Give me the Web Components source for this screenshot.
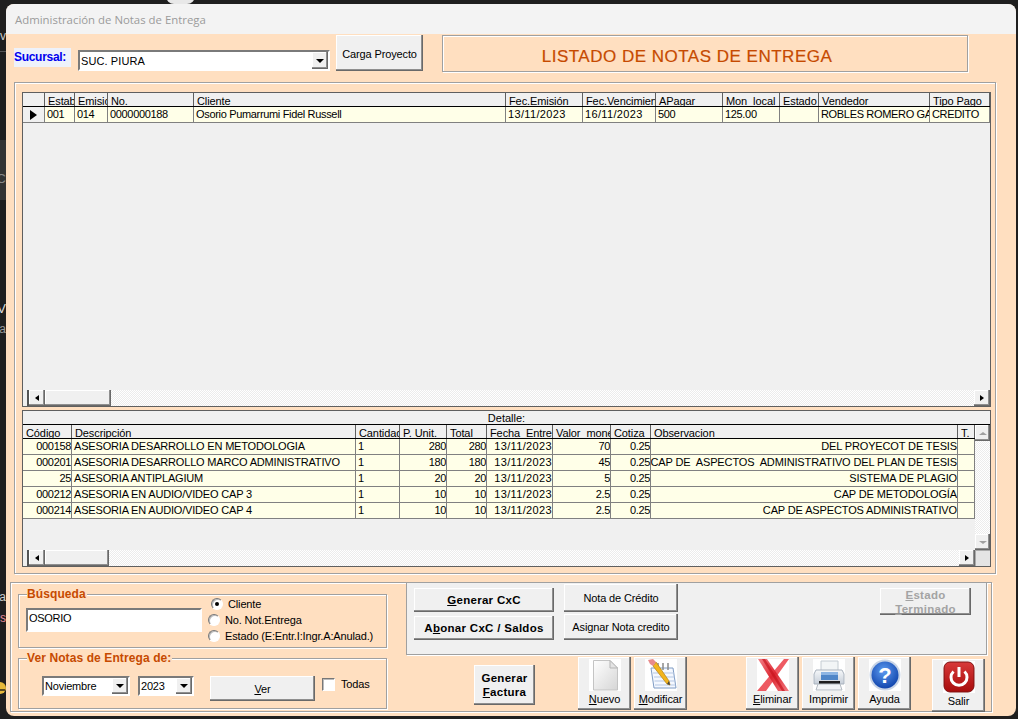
<!DOCTYPE html>
<html lang="es">
<head>
<meta charset="utf-8">
<title>Administración de Notas de Entrega</title>
<style>
  html, body { margin: 0; height: 100%; overflow: hidden; background: #1f1f1f; }
  body { font: 11px "Liberation Sans", Arial, sans-serif; color: #000; }
  svg { display: block; }
</style>
</head>
<body>
<desk-top>
  <app-window heading="Administración de Notas de Entrega">
    <main-form></main-form>
  </app-window>
</desk-top>

<script>
function shadow(el, html) {
  const root = el.attachShadow({ mode: "open" });
  root.innerHTML = html;
  return root;
}

const BEVEL = "inset -1px -1px 0 #696969, inset -2px -2px 0 #8f8f8f, inset 1px 1px 0 #fff";
const SUNKEN = "border: 2px solid; border-color: #7a7a7a #fff #fff #7a7a7a; outline: 0; box-sizing: border-box;";

class DeskTop extends HTMLElement {
  connectedCallback() {
    if (this.shadowRoot) return;
    shadow(this, `
      <style>
        :host { display: block; position: relative; width: 1018px; height: 719px; overflow: hidden; background: #1f1f1f; font: 11px "Liberation Sans", sans-serif; }
        .bit { position: absolute; white-space: nowrap; }
        .notch { left: 166px; top: -4px; width: 29px; height: 8px; border-radius: 0 0 12px 12px; background: #e8e8e8; }
        .rule { left: 0; top: 51px; width: 6px; height: 1px; background: #555; }
        .pane { left: 0; top: 140px; width: 6px; height: 60px; background: #333; }
        .face { left: -6px; top: 682px; width: 12px; height: 12px; }
      </style>
      <div class="bit notch"></div>
      <div class="bit rule"></div>
      <div class="bit pane"></div>
      <span class="bit" style="right:1012px;top:29px;color:#ccc;font-size:12px">ev</span>
      <span class="bit" style="right:1012px;top:171px;color:#888;font-size:13px">C</span>
      <span class="bit" style="right:1012px;top:301px;color:#ddd;font-size:13px">V</span>
      <span class="bit" style="right:1012px;top:322px;color:#999;font-size:12px">a</span>
      <span class="bit" style="right:1012px;top:590px;color:#ccc;font-size:12px">na</span>
      <span class="bit" style="right:1012px;top:611px;color:#e58a9a;font-size:12px">s</span>
      <svg class="bit face" viewBox="0 0 12 12"><circle cx="6" cy="6" r="6" fill="#e8b93a"/><path d="M6 8h5" stroke="#5a4a20" stroke-width="2"/></svg>
      <slot></slot>
    `);
  }
}

class AppWindow extends HTMLElement {
  connectedCallback() {
    if (this.shadowRoot) return;
    shadow(this, `
      <style>
        :host { display: flex; flex-direction: column; position: absolute; left: 6px; top: 4px; width: 1010px; height: 712px; border-radius: 8px; overflow: hidden; background: #ffdfc0; }
        header { height: 30px; flex: none; background: #f3f3f3; color: #9b9b9b; font: 11.4px/31px "Open Sans", sans-serif; padding-left: 9px; }
      </style>
      <header>${this.getAttribute("heading")}</header>
      <slot></slot>
    `);
  }
}

class WinButton extends HTMLElement {
  connectedCallback() {
    if (this.shadowRoot) return;
    shadow(this, `
      <style>
        :host { display: flex; flex: none; align-items: center; justify-content: center; text-align: center; box-sizing: border-box; background: #f0f0f0; box-shadow: ${BEVEL}; font: 11px/13px "Liberation Sans", sans-serif; letter-spacing: -.12px; padding-top: 1px; }
        :host([bold]) { font-weight: bold; letter-spacing: .3px; font-size: 11.5px; line-height: 14px; padding-top: 0; }
        :host([disabled]) { color: #a3a3a3; }
      </style>
      <div><slot></slot></div>
    `);
  }
}

class IconButton extends HTMLElement {
  connectedCallback() {
    if (this.shadowRoot) return;
    shadow(this, `
      <style>
        :host { display: flex; flex: none; flex-direction: column; align-items: center; box-sizing: border-box; width: 53px; height: 53px; padding-top: 2px; background: #f0f0f0; box-shadow: ${BEVEL}; font: 11px/13px "Liberation Sans", sans-serif; letter-spacing: -.1px; }
        .pic { width: 32px; height: 32px; background: #fff; }
        .txt { margin-top: 2px; }
      </style>
      <div class="pic"><slot name="icon"></slot></div>
      <div class="txt"><slot></slot></div>
    `);
  }
}

class WinCombo extends HTMLElement {
  connectedCallback() {
    if (this.shadowRoot) return;
    shadow(this, `
      <style>
        :host { display: flex; flex: none; box-sizing: border-box; ${SUNKEN} background: #fff; font: 11px "Liberation Sans", sans-serif; letter-spacing: -.2px; align-items: center; justify-content: space-between; padding-left: 1px; }
        .btn { width: 16px; height: 100%; display: flex; align-items: center; justify-content: center; background: #f0f0f0; box-shadow: ${BEVEL}; }
        i { border: 4px solid transparent; border-top: 4px solid #000; border-bottom: 0; }
      </style>
      <span><slot></slot></span>
      <div class="btn"><i></i></div>
    `);
  }
}

class GroupBox extends HTMLElement {
  connectedCallback() {
    if (this.shadowRoot) return;
    const legend = this.getAttribute("legend");
    shadow(this, `
      <style>
        :host { display: block; flex: none; position: relative; box-sizing: border-box; border: 1px solid #a0a0a0; box-shadow: inset 1px 1px 0 #fff, 1px 1px 0 #fff; }
        .legend { position: absolute; left: 8px; top: -8px; padding: 0 1px 0 0; background: #ffdfc0; color: #c64a00; font: bold 12px/15px "Liberation Sans", sans-serif; letter-spacing: .1px; white-space: nowrap; }
      </style>
      ${legend ? `<div class="legend">${legend}</div>` : ""}
      <slot></slot>
    `);
  }
}

class OptionItem extends HTMLElement {
  connectedCallback() {
    if (this.shadowRoot) return;
    const box = this.getAttribute("kind") === "check";
    shadow(this, `
      <style>
        :host { display: flex; flex: none; align-items: center; height: 16px; font: 11px "Liberation Sans", sans-serif; letter-spacing: -.15px; white-space: nowrap; }
        .mark { flex: none; width: 12px; height: 12px; box-sizing: border-box; margin-right: 5px; background: #fff; display: flex; align-items: center; justify-content: center; border: 1px solid; border-color: #777 #fff #fff #777; border-radius: ${box ? "0" : "50%"}; box-shadow: inset 1px 1px 0 #bbb; }
        :host([kind=check]) .mark { width: 13px; height: 13px; margin-right: 6px; }
        b { width: 4px; height: 4px; border-radius: 50%; background: #000; display: none; }
        :host([on]) b { display: block; }
      </style>
      <div class="mark"><b></b></div><span><slot></slot></span>
    `);
  }
}

class ScrollBar extends HTMLElement {
  connectedCallback() {
    if (this.shadowRoot) return;
    const thumb = this.getAttribute("thumb") || 66;
    shadow(this, `
      <style>
        :host { display: flex; flex: none; height: 16px; background: #f0f0f0; }
        .lead { width: 4px; flex: none; }
        .stop { width: 2px; flex: none; background: #555; margin-right: 0; }
        .btn { width: 16px; flex: none; display: flex; align-items: center; justify-content: center; background: #f0f0f0; box-shadow: ${BEVEL}; }
        .thumb { width: ${thumb}px; flex: none; background: #f0f0f0; box-shadow: ${BEVEL}; }
        .track { flex: 1; background: conic-gradient(#fff 25%, #ececec 0 50%, #fff 0 75%, #ececec 0) 0 0 / 2px 2px; }
        .l { border: 3px solid transparent; border-right: 4px solid #000; border-left: 0; }
        .r { border: 3px solid transparent; border-left: 4px solid #000; border-right: 0; }
      </style>
      <div class="lead"></div><div class="stop"></div>
      <div class="btn"><i class="l"></i></div>
      <div class="thumb"></div>
      <div class="track"></div>
      <div class="btn"><i class="r"></i></div>
    `);
  }
}

class DataGrid extends HTMLElement {
  set data({ columns, rows, caption, corner }) {
    const root = this.shadowRoot || this.attachShadow({ mode: "open" });
    const tpl = columns.map(c => c.w + "px").join(" ");
    const head = columns.map(c => `<div class="hd">${c.t || ""}</div>`).join("");
    const body = rows.map(row => `<div class="row" style="grid-template-columns:${tpl}">` + row.map((val, i) => {
      const c = columns[i];
      const cls = c.marker ? "cell marker" : c.right ? "cell right" : "cell";
      const ls = c.ls ? ` style="letter-spacing:${c.ls}px"` : "";
      return `<div class="${cls}"${ls}><span>${val}</span></div>`;
    }).join("") + "</div>").join("");
    root.innerHTML = `
      <style>
        :host { display: flex; flex-direction: column; flex: none; box-sizing: border-box; border: 1px solid #5f5f5f; background: #f0f0f0; overflow: hidden; font: 11px "Liberation Sans", sans-serif; }
        .caption { height: 13px; flex: none; line-height: 14px; text-align: center; border-bottom: 1px solid #000; }
        .main { flex: 1; display: flex; min-height: 0; }
        .table { flex: 1; min-width: 0; overflow: hidden; }
        .heads { display: grid; grid-template-columns: ${tpl}; height: 14px; box-sizing: border-box; border-bottom: 1px solid #000; }
        .hd { border-right: 1px solid #5f5f5f; padding-left: 3px; line-height: 16px; height: 13px; overflow: hidden; white-space: nowrap; letter-spacing: -.1px; }
        .row { display: grid; height: 16px; box-sizing: border-box; background: #ffffe8; border-bottom: 1px solid #808080; }
        .cell { border-right: 1px solid #808080; padding: 0 1px 0 2px; line-height: 15px; height: 15px; overflow: hidden; white-space: pre; letter-spacing: -.33px; }
        .right { display: flex; justify-content: flex-end; padding: 0; }
        .right span { flex: none; }
        .marker { background: #f0f0f0; padding: 0; }
        .marker i { display: block; margin: 3px 0 0 7px; border: 5px solid transparent; border-left: 7px solid #000; border-right: 0; }
        .vbar { width: 15px; flex: none; display: flex; flex-direction: column; background: conic-gradient(#fff 25%, #ececec 0 50%, #fff 0 75%, #ececec 0) 0 0 / 2px 2px; justify-content: space-between; }
        .vbtn { height: 16px; background: #f0f0f0; box-shadow: ${BEVEL}; display: flex; align-items: center; justify-content: center; }
        .up { border: 4px solid transparent; border-bottom: 3px solid #a0a0a0; border-top: 0; }
        .dn { border: 4px solid transparent; border-top: 3px solid #a0a0a0; border-bottom: 0; }
        .foot { display: flex; flex: none; }
        .foot win-scroll { flex: 1; }
        .corner { width: 15px; height: 16px; flex: none; background: #e4e4e4; box-shadow: inset 1px 1px 0 #aaa; }
      </style>
      ${caption ? `<div class="caption">${caption}</div>` : ""}
      <div class="main">
        <div class="table"><div class="heads">${head}</div>${body}</div>
        ${corner ? `<div class="vbar"><div class="vbtn"><i class="up"></i></div><div class="vbtn"><i class="dn"></i></div></div>` : ""}
      </div>
      <div class="foot"><win-scroll thumb="${corner ? 64 : 66}"></win-scroll>${corner ? `<div class="corner"></div>` : ""}</div>
    `;
  }
}

const ICONS = {
  doc: `<svg slot="icon" width="32" height="32" viewBox="0 0 32 32"><defs><linearGradient id="d" x1="0" y1="0" x2="1" y2="1"><stop offset="0" stop-color="#fff"/><stop offset="1" stop-color="#d6d6d6"/></linearGradient></defs><path d="M4.500 1.500H21L28.500 9V31H4.500Z" fill="url(#d)" stroke="#c4c4c4"/><path d="M21 1.500V9H28.500Z" fill="#e4e4e4" stroke="#b5b5b5"/></svg>`,
  pad: `<svg slot="icon" width="32" height="32" viewBox="0 0 32 32"><path d="M6 9H28L31 29H9Z" fill="#f4f8ff" stroke="#7f9cc4"/><path d="M8 14H29M9 18H29.500M9.500 22H30M10 26H30.500" stroke="#b5c7e3"/><path d="M13 4V11M18 4V11M23 4V11" stroke="#8a8a8a" stroke-width="1.500"/><path d="M8 7L22 25L25 26L24 22L11 3Z" fill="#f2b51e" stroke="#b57f10" stroke-width=".7"/><path d="M3 1L8 0L11 3L8 7L5 5Z" fill="#e88b8b"/><path d="M22 25L25 26L24 22Z" fill="#444"/></svg>`,
  del: `<svg slot="icon" width="32" height="32" viewBox="0 0 32 32"><defs><linearGradient id="x" x1="0" y1="0" x2="1" y2="1"><stop offset="0" stop-color="#f48088"/><stop offset=".5" stop-color="#dc2630"/><stop offset="1" stop-color="#f27a80"/></linearGradient></defs><path d="M27 0H32L9 32H0Z" fill="#ee5a62"/><path d="M1 0H10L32 32H21Z" fill="url(#x)"/><path d="M5 0H8L28 32H25Z" fill="#c8141e" opacity=".7"/></svg>`,
  print: `<svg slot="icon" width="32" height="32" viewBox="0 0 32 32"><defs><linearGradient id="p" x1="0" y1="0" x2="0" y2="1"><stop offset="0" stop-color="#f6f8fa"/><stop offset="1" stop-color="#c6ced8"/></linearGradient></defs><path d="M8 2H25V12H8Z" fill="#f2f5f6" stroke="#c4ccd2"/><path d="M3 11H29L31 15V25H1V15Z" fill="url(#p)" stroke="#aab3be"/><rect x="8" y="13" width="17" height="8" fill="#4f86c8"/><rect x="8" y="13" width="17" height="3" fill="#8db5e3"/><rect x="6" y="22" width="21" height="3" fill="#1d1d1d"/><path d="M5 25H27L29 31H3Z" fill="#f2f4f6" stroke="#b4bbc2"/></svg>`,
  help: `<svg slot="icon" width="32" height="32" viewBox="0 0 32 32"><defs><radialGradient id="h" cx=".45" cy=".35" r=".7"><stop offset="0" stop-color="#5d9bf0"/><stop offset="1" stop-color="#0c3fa8"/></radialGradient></defs><circle cx="16" cy="16" r="15.500" fill="#c8d4e6"/><circle cx="16" cy="16" r="13.500" fill="url(#h)"/><text x="16" y="24" text-anchor="middle" font-family="Liberation Sans" font-weight="bold" font-size="22" fill="#fff">?</text></svg>`,
  off: `<svg slot="icon" width="32" height="32" viewBox="0 0 32 32"><defs><linearGradient id="o" x1="0" y1="0" x2="0" y2="1"><stop offset="0" stop-color="#d83a3a"/><stop offset="1" stop-color="#a80c0c"/></linearGradient></defs><rect x="1" y="1" width="30" height="30" rx="6" fill="url(#o)" stroke="#7d1212"/><path d="M10.500 10.500A8 8 0 1 0 21.500 10.500" fill="none" stroke="#fff" stroke-width="3"/><path d="M16 6V16" stroke="#fff" stroke-width="3"/></svg>`,
};

class MainForm extends HTMLElement {
  connectedCallback() {
    if (this.shadowRoot) return;
    const root = shadow(this, `
      <style>
        :host { display: block; font: 11px "Liberation Sans", sans-serif; }
        .top { display: flex; align-items: flex-start; padding: 1px 0 0 8px; height: 37px; }
        .suc { flex: none; width: 57px; height: 19px; margin-top: 13px; box-sizing: border-box; background: #eef2fb; color: #0000ee; font: bold 12px/18px "Liberation Sans", sans-serif; letter-spacing: -.3px; }
        .banner { flex: none; box-sizing: border-box; width: 526px; height: 37px; margin-left: 19px; border: 1px solid #a0a0a0; box-shadow: 1px 1px 0 #fff, inset 1px 1px 0 #fff; text-align: center; color: #c64a00; font: 17px/41px "Liberation Sans", sans-serif; letter-spacing: .5px; padding-right: 36px; -webkit-text-stroke: .2px #c64a00; }
        .list { margin: 10px 0 0 8px; width: 982px; height: 492px; padding: 9px 0 0 7px; }
        .list data-grid + data-grid { margin-top: 3px; }
        .bottom { position: relative; display: flex; align-items: flex-start; margin: 8px 0 0 4px; width: 982px; height: 130px; box-sizing: border-box; }
        .left { flex: none; width: 369px; margin: 11px 0 0 7px; display: flex; flex-direction: column; }
        .search { height: 54px; display: flex; }
        .search-in { display: flex; padding: 13px 0 0 7px; }
        .field { flex: none; width: 176px; height: 24px; ${SUNKEN} background: #fff; padding: 1px 0 0 1px; font-size: 11px; line-height: 14px; letter-spacing: -.3px; }
        .radios { margin: -12px 0 0 6px; }
        .ver { margin-top: 10px; height: 51px; }
        .ver-in { display: flex; align-items: flex-start; padding: 17px 0 0 23px; }
        .right { flex: none; width: 581px; margin: -1px 0 0 19px; }
        .panel { position: relative; display: flex; align-items: flex-start; height: 73px; box-sizing: border-box; background: #f0f0f0; border: 1px solid #a0a0a0; box-shadow: 1px 1px 0 #fff; }
        .stack { display: flex; flex-direction: column; flex: none; }
        .tools { display: flex; align-items: flex-start; margin-top: 2px; }
      </style>
      <div class="top">
        <div class="suc">Sucursal:</div>
        <win-combo style="margin:15px 0 0 7px;width:252px;height:21px;letter-spacing:.1px">SUC. PIURA</win-combo>
        <win-button style="margin:0 0 0 6px;width:87px;height:36px;padding-top:2px">Carga Proyecto</win-button>
        <div class="banner">LISTADO DE NOTAS DE ENTREGA</div>
      </div>
      <group-box class="list">
        <data-grid id="notes" style="width:969px;height:315px"></data-grid>
        <data-grid id="detail" style="width:969px;height:157px"></data-grid>
      </group-box>
      <group-box class="bottom">
        <div style="display:flex;align-items:flex-start;width:100%">
          <div class="left">
            <group-box class="search" legend="Búsqueda">
              <div class="search-in">
                <div class="field">OSORIO</div>
                <div class="radios">
                  <option-item on style="margin-left:3px">Cliente</option-item>
                  <option-item>No. Not.Entrega</option-item>
                  <option-item>Estado (E:Entr.I:Ingr.A:Anulad.)</option-item>
                </div>
              </div>
            </group-box>
            <group-box class="ver" legend="Ver Notas de Entrega de:">
              <div class="ver-in">
                <win-combo style="width:88px;height:20px">Noviembre</win-combo>
                <win-combo style="margin-left:8px;width:56px;height:20px">2023</win-combo>
                <win-button style="margin-left:16px;width:105px;height:25px"><span><u>V</u>er</span></win-button>
                <option-item kind="check" style="margin:0 0 0 7px">Todas</option-item>
              </div>
            </group-box>
          </div>
          <div class="right">
            <div class="panel">
              <div class="stack" style="margin:5px 0 0 7px;gap:4px">
                <win-button bold style="width:140px;height:24px"><span><u>G</u>enerar CxC</span></win-button>
                <win-button bold style="width:140px;height:24px"><span>A<u>b</u>onar CxC / Saldos</span></win-button>
              </div>
              <div class="stack" style="margin:1px 0 0 10px;gap:2px">
                <win-button style="width:114px;height:28px">Nota de Crédito</win-button>
                <win-button style="width:114px;height:26px">Asignar Nota credito</win-button>
              </div>
              <win-button bold disabled style="margin:5px 0 0 202px;width:91px;height:27px"><span><u>E</u>stado<br><u>T</u>erminado</span></win-button>
            </div>
            <div class="tools">
              <win-button bold style="margin:8px 0 0 68px;width:61px;height:40px"><span>Generar<br><u>F</u>actura</span></win-button>
              <icon-button style="margin-left:43px">${ICONS.doc}<span><u>N</u>uevo</span></icon-button>
              <icon-button style="margin-left:3px">${ICONS.pad}<span><u>M</u>odificar</span></icon-button>
              <icon-button style="margin-left:59px">${ICONS.del}<span><u>E</u>liminar</span></icon-button>
              <icon-button style="margin-left:3px">${ICONS.print}<span>Imprimir</span></icon-button>
              <icon-button style="margin-left:3px">${ICONS.help}<span>Ayuda</span></icon-button>
              <icon-button style="margin:2px 0 0 21px">${ICONS.off}<span>Salir</span></icon-button>
            </div>
          </div>
        </div>
      </group-box>
    `);
    root.getElementById("notes").data = {
      columns: [
        { w: 22, marker: true }, { w: 30, t: "Estab" }, { w: 33, t: "Emisio" }, { w: 86, t: "No." },
        { w: 312, t: "Cliente" }, { w: 77, t: "Fec.Emisión", ls: .35 }, { w: 73, t: "Fec.Vencimien", ls: .35 },
        { w: 67, t: "APagar" }, { w: 57, t: "Mon_local" }, { w: 39, t: "Estado" },
        { w: 111, t: "Vendedor" }, { w: 60, t: "Tipo Pago" },
      ],
      rows: [["<i></i>", "001", "014", "0000000188", "Osorio Pumarrumi Fidel Russell", "13/11/2023", "16/11/2023", "500", "125.00", "", "ROBLES ROMERO GA", "CREDITO"]],
    };
    root.getElementById("detail").data = {
      caption: "Detalle:",
      corner: true,
      columns: [
        { w: 49, t: "Código", right: true }, { w: 284, t: "Descripción", ls: -.18 }, { w: 44, t: "Cantidad" },
        { w: 47, t: "P. Unit.", right: true }, { w: 40, t: "Total", right: true }, { w: 66, t: "Fecha_Entre", right: true, ls: .35 },
        { w: 58, t: "Valor_mone", right: true }, { w: 40, t: "Cotiza", right: true }, { w: 307, t: "Observacion", right: true, ls: -.13 }, { w: 17, t: "T." },
      ],
      rows: [
        ["000158", "ASESORIA DESARROLLO EN METODOLOGIA", "1", "280", "280", "13/11/2023", "70", "0.25", "DEL PROYECOT DE TESIS", ""],
        ["000201", "ASESORIA DESARROLLO MARCO ADMINISTRATIVO", "1", "180", "180", "13/11/2023", "45", "0.25", "CAP DE  ASPECTOS  ADMINISTRATIVO DEL PLAN DE TESIS", ""],
        ["25", "ASESORIA ANTIPLAGIUM", "1", "20", "20", "13/11/2023", "5", "0.25", "SISTEMA DE PLAGIO", ""],
        ["000212", "ASESORIA EN AUDIO/VIDEO CAP 3", "1", "10", "10", "13/11/2023", "2.5", "0.25", "CAP DE METODOLOGÍA", ""],
        ["000214", "ASESORIA EN AUDIO/VIDEO CAP 4", "1", "10", "10", "13/11/2023", "2.5", "0.25", "CAP DE ASPECTOS ADMINISTRATIVO", ""],
      ],
    };
  }
}

customElements.define("desk-top", DeskTop);
customElements.define("app-window", AppWindow);
customElements.define("win-button", WinButton);
customElements.define("icon-button", IconButton);
customElements.define("win-combo", WinCombo);
customElements.define("group-box", GroupBox);
customElements.define("option-item", OptionItem);
customElements.define("win-scroll", ScrollBar);
customElements.define("data-grid", DataGrid);
customElements.define("main-form", MainForm);
</script>
</body>
</html>
